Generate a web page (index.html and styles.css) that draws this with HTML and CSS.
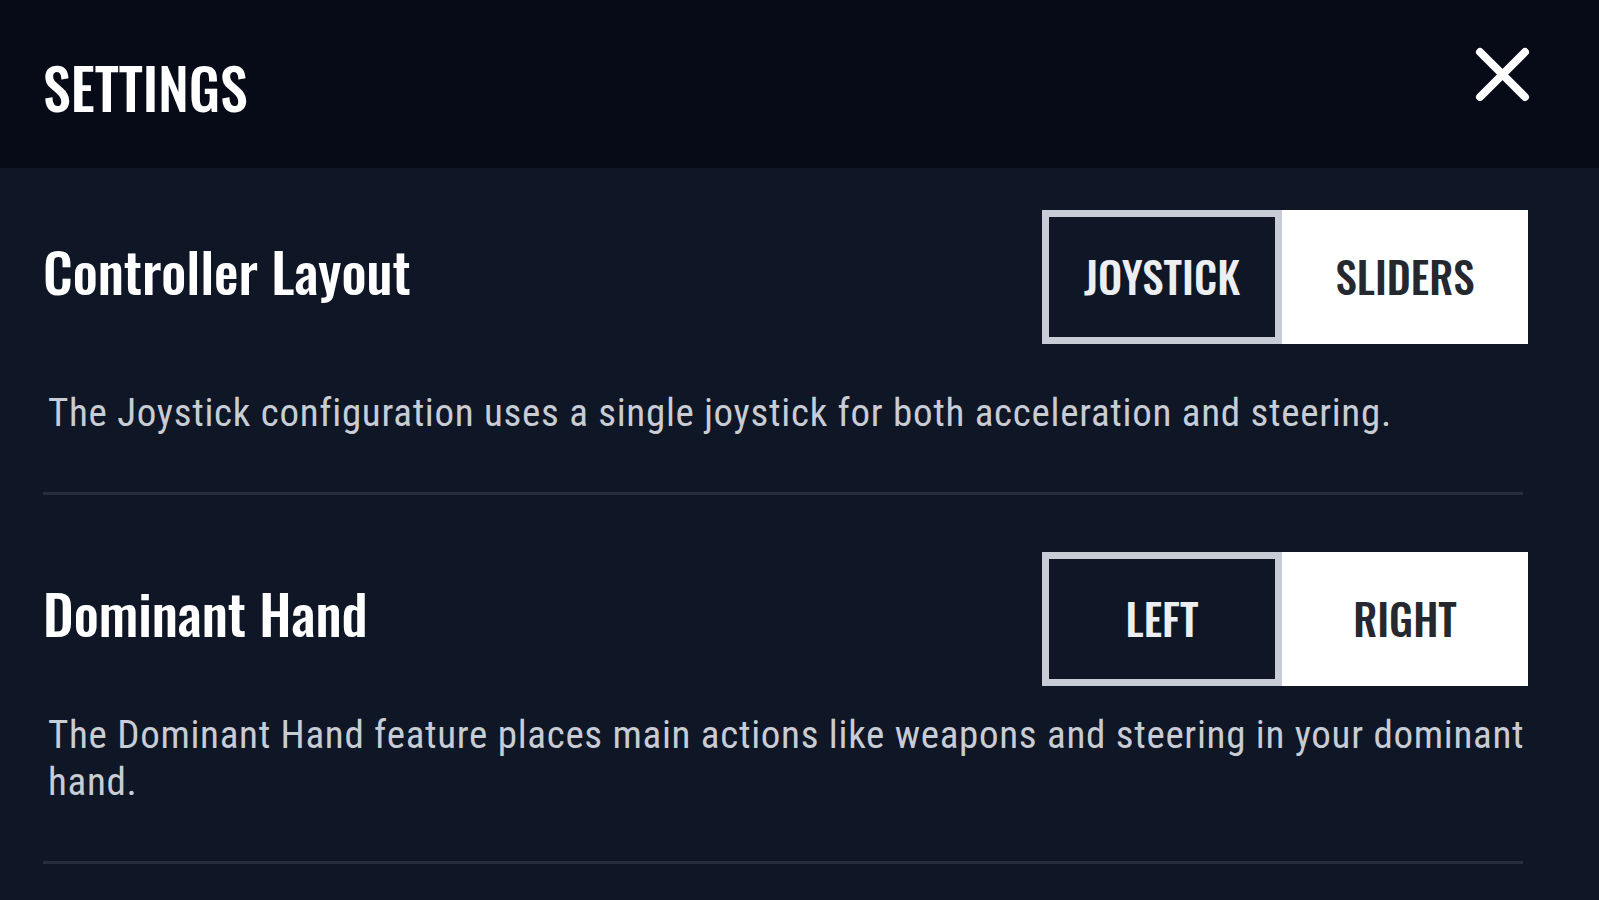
FILE: index.html
```html
<!DOCTYPE html>
<html lang="en">
<head>
<meta charset="utf-8">
<title>Settings</title>
<link rel="stylesheet" href="styles.css">
</head>
<body>
<header class="header">
  <h1 class="title">SETTINGS</h1>
  <button class="close" aria-label="Close">
    <svg width="55" height="55" viewBox="0 0 55 55"><path d="M5 5 L50 50 M50 5 L5 50" stroke="#ffffff" stroke-width="8" stroke-linecap="round" fill="none"/></svg>
  </button>
</header>
<main class="content">
  <section class="setting">
    <div class="row">
      <h2 class="label">Controller Layout</h2>
      <div class="toggle">
        <span class="opt active">JOYSTICK</span>
        <span class="opt">SLIDERS</span>
      </div>
    </div>
    <p class="desc">The Joystick configuration uses a single joystick for both acceleration and steering.</p>
  </section>
  <section class="setting second">
    <div class="row">
      <h2 class="label">Dominant Hand</h2>
      <div class="toggle">
        <span class="opt active">LEFT</span>
        <span class="opt">RIGHT</span>
      </div>
    </div>
    <p class="desc">The Dominant Hand feature places main actions like weapons and steering in your dominant hand.</p>
  </section>
</main>
</body>
</html>
```
FILE: styles.css
```css
html, body {
  margin: 0;
  padding: 0;
  background: #0f1626;
}
body {
  height: 900px;
  overflow: hidden;
  font-family: "Roboto Condensed", "Liberation Sans", sans-serif;
}
.header {
  height: 168px;
  box-sizing: border-box;
  background: #070b17;
  display: flex;
  justify-content: space-between;
  align-items: flex-start;
  padding: 0 69px 0 43px;
}
.title {
  margin: 59px 0 0;
  font-family: Oswald, "Roboto Condensed", sans-serif;
  font-weight: 500;
  font-size: 56px;
  line-height: 1;
  color: #ffffff;
}
.close {
  margin-top: 47px;
  padding: 0;
  border: 0;
  background: none;
  width: 55px;
  height: 55px;
  display: block;
}
.close svg { display: block; }
.content {
  padding: 42px 71px 0 43px;
}
.setting {
  border-bottom: 3px solid #262d3b;
  margin-right: 5px;
  padding-bottom: 55px;
}
.setting.second {
  margin-top: 57px;
}
.row {
  display: flex;
  justify-content: space-between;
  align-items: center;
  margin-right: -5px;
}
.label {
  margin: 0 0 14px;
  font-family: Oswald, "Roboto Condensed", sans-serif;
  font-weight: 500;
  font-size: 55px;
  line-height: 1;
  color: #ffffff;
}
.toggle {
  display: flex;
  width: 486px;
  height: 134px;
}
.opt {
  flex: 1;
  display: flex;
  align-items: center;
  justify-content: center;
  box-sizing: border-box;
  padding-bottom: 4px;
  background: #ffffff;
  color: #25282e;
  font-family: Oswald, "Roboto Condensed", sans-serif;
  font-weight: 500;
  font-size: 43px;
  line-height: 1;
}
.opt.active {
  flex: 0 0 240px;
  border: 7px solid #c8ccd6;
  background: #0f1626;
  color: #eceef2;
}
.desc {
  margin: 46px -12px 0 0;
  padding-left: 5px;
  font-size: 39px;
  letter-spacing: 0.7px;
  line-height: 47px;
  color: #c8ccd4;
}
.second .desc {
  margin-top: 26px;
}
```
